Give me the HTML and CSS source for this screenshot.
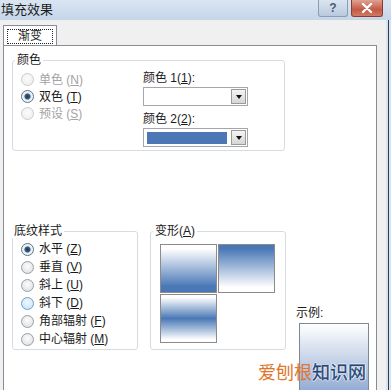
FILE: index.html
```html
<!DOCTYPE html>
<html lang="zh-CN">
<head>
    <meta charset="UTF-8">
    <title>填充效果</title>
    <link rel="stylesheet" href="styles.css">
</head>
<body>
    <div class="window">
        <div class="titlebar">
            <span class="title">填充效果</span>
            <div class="caption-btns">
                <span class="cap-btn cap-help">?</span>
                <span class="cap-btn cap-close">
                    <svg width="14" height="10" viewBox="0 0 14 10"><path d="M3 1 L11 9 M11 1 L3 9" stroke="#fff" stroke-width="2.4" stroke-linecap="round"/></svg>
                </span>
            </div>
        </div>

        <div class="frame">
            <div class="client">
                <div class="tabs">
                    <div class="tab active"><span class="focus">渐变</span></div>
                </div>

                <div class="panel">
                    <!-- 颜色 -->
                    <fieldset class="group group-color">
                        <legend>颜色</legend>
                        <div class="color-cols">
                            <div class="opts">
                                <label class="opt disabled"><span class="radio"></span><span>单色 (<u>N</u>)</span></label>
                                <label class="opt"><span class="radio checked"></span><span>双色 (<u>T</u>)</span></label>
                                <label class="opt disabled"><span class="radio"></span><span>预设 (<u>S</u>)</span></label>
                            </div>
                            <div class="pickers">
                                <div class="pick-label">颜色 1(<u>1</u>):</div>
                                <div class="combo">
                                    <span class="combo-value"></span>
                                    <span class="combo-btn"></span>
                                </div>
                                <div class="pick-label second">颜色 2(<u>2</u>):</div>
                                <div class="combo">
                                    <span class="combo-value"><span class="swatch-blue"></span></span>
                                    <span class="combo-btn"></span>
                                </div>
                            </div>
                        </div>
                    </fieldset>

                    <div class="bottom-row">
                        <!-- 底纹样式 -->
                        <fieldset class="group group-style">
                            <legend>底纹样式</legend>
                            <div class="opts tight">
                                <label class="opt"><span class="radio checked"></span><span>水平 (<u>Z</u>)</span></label>
                                <label class="opt"><span class="radio"></span><span>垂直 (<u>V</u>)</span></label>
                                <label class="opt"><span class="radio"></span><span>斜上 (<u>U</u>)</span></label>
                                <label class="opt"><span class="radio hover"></span><span>斜下 (<u>D</u>)</span></label>
                                <label class="opt"><span class="radio"></span><span>角部辐射 (<u>F</u>)</span></label>
                                <label class="opt"><span class="radio"></span><span>中心辐射 (<u>M</u>)</span></label>
                            </div>
                        </fieldset>

                        <!-- 变形 -->
                        <fieldset class="group group-variant">
                            <legend>变形(<u>A</u>)</legend>
                            <div class="variants">
                                <div class="variant v-up"></div>
                                <div class="variant v-down"></div>
                                <div class="variant v-mid"></div>
                            </div>
                        </fieldset>

                        <div class="sample">
                            <div class="sample-label">示例:</div>
                            <div class="sample-box"></div>
                        </div>
                    </div>
                </div>
            </div>
            <div class="frame-edge"></div>
        </div>

        <div class="watermark"><span class="wm-a">爱刨根</span><span class="wm-b">知识网</span></div>
    </div>
</body>
</html>
```

FILE: styles.css
```css
body {
    margin: 0;
    background: #d6e4f1;
    font-family: "Liberation Sans", "Noto Sans CJK SC", sans-serif;
    font-size: 12px;
    color: #1a1a1a;
}
.window {
    position: relative;
    width: 391px;
    height: 390px;
    overflow: hidden;
    background: #d6e4f1;
}

/* title bar */
.titlebar {
    height: 20px;
    display: flex;
    justify-content: space-between;
    background: linear-gradient(#d9e5f2, #c5d6e9);
}
.title {
    padding: 2px 0 0 1px;
    font-size: 13px;
    line-height: 16px;
    color: #1e1e1e;
}
.caption-btns {
    display: flex;
    gap: 3px;
    padding-right: 8px;
}
.cap-btn {
    width: 28px;
    height: 16px;
    border: 1px solid #8d9cb0;
    border-top: none;
    border-radius: 0 0 3px 3px;
    display: flex;
    align-items: center;
    justify-content: center;
}
.cap-help {
    background: linear-gradient(#dbe5f1, #b9c9dd);
    color: #4d5d73;
    font-weight: bold;
    font-size: 12px;
}
.cap-close {
    width: 30px;
    background: linear-gradient(#e0a192, #c35a44 60%, #d27a63);
    border-color: #8b3d30;
}

/* frame */
.frame {
    display: flex;
    height: 370px;
}
.client {
    width: 383px;
    padding: 5px 0 0 3px;
    background: #f0f0f0;
}
.frame-edge {
    width: 1px;
    margin-left: 2px;
    background: #2f3d4c;
}

/* tab */
.tabs {
    display: flex;
    height: 20px;
}
.tab {
    position: relative;
    z-index: 1;
    width: 54px;
    height: 20px;
    border: 1px solid #898c95;
    border-bottom: none;
    background: #fff;
    display: flex;
    justify-content: center;
    padding-top: 3px;
    box-sizing: border-box;
}
.focus {
    width: 44px;
    height: 13px;
    border: 1px dotted #222;
    text-align: center;
    line-height: 13px;
    font-size: 12px;
}
.panel {
    width: 374px;
    height: 360px;
    border: 1px solid #898c95;
    background: #fff;
    padding: 0 8px;
    box-sizing: border-box;
}

/* group boxes */
.group {
    margin: 0;
    min-width: 0;
    border: 1px solid #d5dde3;
    border-radius: 3px;
    box-sizing: border-box;
}
.group legend {
    padding: 0 2px;
    margin-left: -6px;
    line-height: 14px;
    font-size: 12px;
}
.group-color {
    width: 273px;
    height: 98px;
    margin-top: 7px;
    padding: 4px 8px 0;
}
.color-cols {
    display: flex;
}
.opts {
    width: 122px;
    display: flex;
    flex-direction: column;
}
.opt {
    height: 17px;
    display: flex;
    align-items: center;
    gap: 5px;
    line-height: 14px;
    white-space: pre;
}
.opts.tight {
    width: auto;
}
.opts.tight .opt { height: 18px; }
.opt.disabled { color: #a3a3a3; }
.opt u { text-decoration: underline; }

.radio {
    width: 11px;
    height: 11px;
    border-radius: 50%;
    border: 1px solid #9a9fa6;
    background: radial-gradient(circle at 50% 40%, #fdfdfd, #d8dadd);
    flex-shrink: 0;
}
.opt.disabled .radio {
    border-color: #c9ccd0;
    background: radial-gradient(circle at 50% 40%, #fbfbfb, #ececec);
}
.radio.checked {
    background: radial-gradient(circle, #1f3a55 0, #2f5d86 2.5px, #dfe4ea 3.5px, #f6f7f8 5px);
    border-color: #5f6f80;
}
.radio.hover {
    border-color: #6f9fc8;
    background: radial-gradient(circle at 50% 40%, #f2f9ff, #bfe0f7);
}

/* colour pickers */
.pickers {
    display: flex;
    flex-direction: column;
}
.pick-label {
    line-height: 14px;
    white-space: pre;
}
.pick-label.second { margin-top: 6px; }
.combo {
    margin-top: 2px;
    width: 105px;
    height: 19px;
    border: 1px solid #a2a7ae;
    box-sizing: border-box;
    display: flex;
    align-items: center;
    background: #fff;
}
.combo-value {
    flex: 1;
    height: 100%;
    display: flex;
    align-items: center;
    padding-left: 3px;
}
.swatch-blue {
    width: 80px;
    height: 12px;
    background: #4b78b5;
}
.combo-btn {
    width: 15px;
    height: 15px;
    margin-right: 1px;
    border: 1px solid #9a9a9a;
    box-sizing: border-box;
    background: linear-gradient(#f4f4f4, #d6d6d6);
    display: flex;
    align-items: center;
    justify-content: center;
}
.combo-btn::after {
    content: "";
    border-left: 3.5px solid transparent;
    border-right: 3.5px solid transparent;
    border-top: 4px solid #111;
}

/* bottom row */
.bottom-row {
    display: flex;
    margin-top: 73px;
}
.group-style {
    flex: 0 0 126px;
    height: 126px;
    padding: 2px 8px 0;
}
.group-style legend { margin-left: -9px; }
.group-variant {
    flex: 0 0 136px;
    height: 126px;
    margin-left: 12px;
    padding: 6px 9px 0;
}
.group-variant legend { margin-left: -7px; }
.variants {
    display: grid;
    grid-template-columns: 57px 57px;
    grid-auto-rows: 49px;
    gap: 1px 1px;
}
.variant {
    border: 1px solid #8b8b8b;
}
.v-up { background: linear-gradient(#ffffff 8%, #4a78b6 88%); }
.v-down { background: linear-gradient(#4a78b6 8%, #ffffff 90%); }
.v-mid { background: linear-gradient(#ffffff 5%, #4a78b6 50%, #ffffff 95%); }

.sample {
    flex: 0 0 auto;
    margin-left: 10px;
    padding-top: 82px;
}
.sample-label { line-height: 14px; }
.sample-box {
    margin: 3px 0 0 3px;
    width: 68px;
    height: 70px;
    border: 1px solid #7f8790;
    background: linear-gradient(#ffffff, #8ea8d2);
}

/* watermark over the corner */
.watermark {
    position: absolute;
    left: 258px;
    top: 360px;
    font-family: "Noto Sans CJK SC", sans-serif;
    font-size: 18px;
    line-height: 22px;
}
.wm-a { color: #e0762c; }
.wm-b {
    color: #24477a;
    -webkit-text-stroke: 0.4px #24477a;
    text-shadow: 1px 0 #fff, -1px 0 #fff, 0 1px #fff, 0 -1px #fff;
}
```
